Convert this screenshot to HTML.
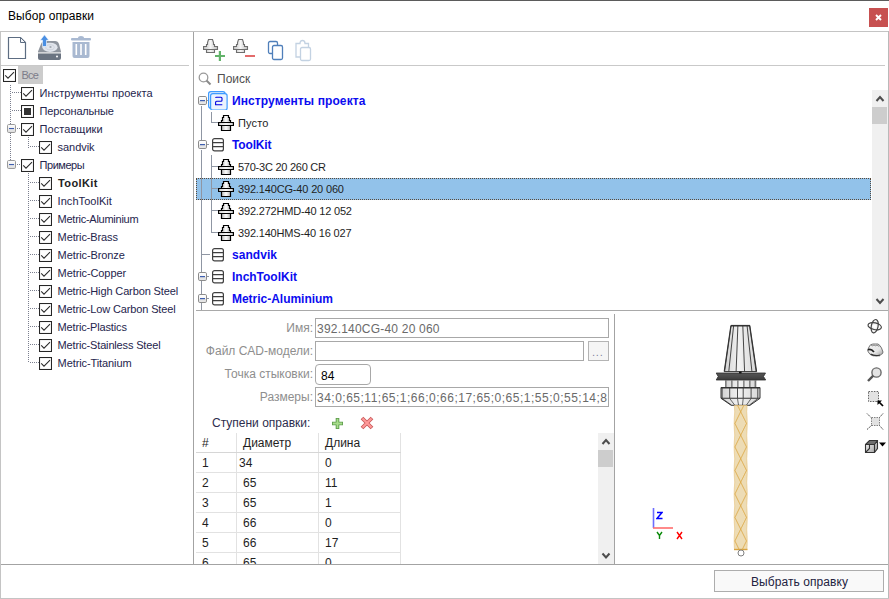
<!DOCTYPE html>
<html><head><meta charset="utf-8"><style>
html,body{margin:0;padding:0;}
body{width:889px;height:599px;position:relative;overflow:hidden;background:#fff;font-family:"Liberation Sans", sans-serif;}
</style></head><body>
<div style="position:absolute;left:0px;top:0px;width:889px;height:1px;background:#5b5b5b;"></div><div style="position:absolute;left:8px;top:10.04px;line-height:12px;font-size:12px;color:#000;font-weight:400;letter-spacing:0.081px;white-space:pre;">Выбор оправки</div><div style="position:absolute;left:869px;top:8px;width:19px;height:19px;background:#c75050;"></div><svg style="position:absolute;left:869px;top:8px" width="19" height="19" viewBox="0 0 19 19"><path d="M7,7 L12,12 M12,7 L7,12" stroke="#fff" stroke-width="1.9"/></svg><div style="position:absolute;left:0px;top:31px;width:889px;height:1px;background:#c4c4c4;"></div><div style="position:absolute;left:0px;top:31px;width:1px;height:568px;background:#c4c4c4;"></div><div style="position:absolute;left:888px;top:31px;width:1px;height:568px;background:#b9b9b9;"></div><div style="position:absolute;left:0px;top:598px;width:889px;height:1px;background:#c4c4c4;"></div><div style="position:absolute;left:193px;top:32px;width:1px;height:532px;background:#a3a3a3;"></div><div style="position:absolute;left:1px;top:564px;width:887px;height:1px;background:#a3a3a3;"></div><svg style="position:absolute;left:7px;top:36px" width="21" height="24" viewBox="0 0 21 24"><path d="M1.5,1.5 H13.5 L18.5,6.5 V22.5 H1.5 Z" fill="#fff" stroke="#5d6d82" stroke-width="1.2"/><path d="M13.5,1.5 V6.5 H18.5 Z" fill="#f2f4f7" stroke="#5d6d82" stroke-width="1"/></svg><svg style="position:absolute;left:37px;top:34px" width="25" height="27" viewBox="0 0 25 27"><path d="M4,10 Q5,7 8,7 H18 Q21,7 22,10 L24,17.5 V19 H1 V17.5 Z" fill="#8f959e"/><ellipse cx="13" cy="13.3" rx="7.6" ry="4.6" fill="#e1e5ec"/><ellipse cx="13" cy="13.3" rx="4.2" ry="2.5" fill="none" stroke="#c9ced8" stroke-width="0.8"/><ellipse cx="13.5" cy="13" rx="1.2" ry="0.8" fill="#8f959e"/><path d="M1,19.2 H24 V24 Q24,26 22,26 H3 Q1,26 1,24 Z" fill="#6b7481"/><rect x="1" y="18.3" width="23" height="1" fill="#f0f0f0"/><circle cx="20" cy="22.6" r="1" fill="#fff"/><path d="M7.5,0.8 L11.8,6.3 H9.5 V12.5 H5.5 V6.3 H3.2 Z" fill="#4a8fe3" stroke="#fff" stroke-width="0.6"/></svg><svg style="position:absolute;left:70px;top:35px" width="22" height="24" viewBox="0 0 22 24"><path d="M8,3 Q8,1 11,1 Q14,1 14,3 Z" fill="#a9b9d1"/><rect x="1" y="3" width="20" height="2.5" rx="1" fill="#a9b9d1"/><path d="M2.5,7 H19.5 V21 Q19.5,23 17.5,23 H4.5 Q2.5,23 2.5,21 Z" fill="#a9b9d1"/><rect x="5.5" y="9" width="1.6" height="11" fill="#fff"/><rect x="10.2" y="9" width="1.6" height="11" fill="#fff"/><rect x="14.9" y="9" width="1.6" height="11" fill="#fff"/></svg><div style="position:absolute;left:1px;top:65px;width:188px;height:1px;background:#c9c9c9;"></div><svg style="position:absolute;left:3px;top:69px" width="13" height="13" viewBox="0 0 13 13"><rect x="0.5" y="0.5" width="12" height="12" fill="#fff" stroke="#262626" stroke-width="1.1"/><path d="M2.2,6.3 L5,9.2 L11,3.2" fill="none" stroke="#2a2a2a" stroke-width="1.05"/></svg><div style="position:absolute;left:18px;top:66px;width:25px;height:18px;background:#cccccc;"></div><div style="position:absolute;left:21.5px;top:70.19px;line-height:11px;font-size:11px;color:#7c7c8a;font-weight:400;letter-spacing:-0.734px;white-space:pre;">Все</div><div style="position:absolute;left:10px;top:85px;width:1px;height:1px;background:#7b7f8f;"></div><div style="position:absolute;left:10px;top:87px;width:1px;height:1px;background:#7b7f8f;"></div><div style="position:absolute;left:10px;top:89px;width:1px;height:1px;background:#7b7f8f;"></div><div style="position:absolute;left:10px;top:91px;width:1px;height:1px;background:#7b7f8f;"></div><div style="position:absolute;left:10px;top:93px;width:1px;height:1px;background:#7b7f8f;"></div><div style="position:absolute;left:10px;top:95px;width:1px;height:1px;background:#7b7f8f;"></div><div style="position:absolute;left:10px;top:97px;width:1px;height:1px;background:#7b7f8f;"></div><div style="position:absolute;left:10px;top:99px;width:1px;height:1px;background:#7b7f8f;"></div><div style="position:absolute;left:10px;top:101px;width:1px;height:1px;background:#7b7f8f;"></div><div style="position:absolute;left:10px;top:103px;width:1px;height:1px;background:#7b7f8f;"></div><div style="position:absolute;left:10px;top:105px;width:1px;height:1px;background:#7b7f8f;"></div><div style="position:absolute;left:10px;top:107px;width:1px;height:1px;background:#7b7f8f;"></div><div style="position:absolute;left:10px;top:109px;width:1px;height:1px;background:#7b7f8f;"></div><div style="position:absolute;left:10px;top:111px;width:1px;height:1px;background:#7b7f8f;"></div><div style="position:absolute;left:10px;top:113px;width:1px;height:1px;background:#7b7f8f;"></div><div style="position:absolute;left:10px;top:115px;width:1px;height:1px;background:#7b7f8f;"></div><div style="position:absolute;left:10px;top:117px;width:1px;height:1px;background:#7b7f8f;"></div><div style="position:absolute;left:10px;top:119px;width:1px;height:1px;background:#7b7f8f;"></div><div style="position:absolute;left:10px;top:121px;width:1px;height:1px;background:#7b7f8f;"></div><div style="position:absolute;left:10px;top:123px;width:1px;height:1px;background:#7b7f8f;"></div><div style="position:absolute;left:10px;top:125px;width:1px;height:1px;background:#7b7f8f;"></div><div style="position:absolute;left:10px;top:127px;width:1px;height:1px;background:#7b7f8f;"></div><div style="position:absolute;left:10px;top:129px;width:1px;height:1px;background:#7b7f8f;"></div><div style="position:absolute;left:10px;top:131px;width:1px;height:1px;background:#7b7f8f;"></div><div style="position:absolute;left:10px;top:133px;width:1px;height:1px;background:#7b7f8f;"></div><div style="position:absolute;left:10px;top:135px;width:1px;height:1px;background:#7b7f8f;"></div><div style="position:absolute;left:10px;top:137px;width:1px;height:1px;background:#7b7f8f;"></div><div style="position:absolute;left:10px;top:139px;width:1px;height:1px;background:#7b7f8f;"></div><div style="position:absolute;left:10px;top:141px;width:1px;height:1px;background:#7b7f8f;"></div><div style="position:absolute;left:10px;top:143px;width:1px;height:1px;background:#7b7f8f;"></div><div style="position:absolute;left:10px;top:145px;width:1px;height:1px;background:#7b7f8f;"></div><div style="position:absolute;left:10px;top:147px;width:1px;height:1px;background:#7b7f8f;"></div><div style="position:absolute;left:10px;top:149px;width:1px;height:1px;background:#7b7f8f;"></div><div style="position:absolute;left:10px;top:151px;width:1px;height:1px;background:#7b7f8f;"></div><div style="position:absolute;left:10px;top:153px;width:1px;height:1px;background:#7b7f8f;"></div><div style="position:absolute;left:10px;top:155px;width:1px;height:1px;background:#7b7f8f;"></div><div style="position:absolute;left:10px;top:157px;width:1px;height:1px;background:#7b7f8f;"></div><div style="position:absolute;left:10px;top:159px;width:1px;height:1px;background:#7b7f8f;"></div><div style="position:absolute;left:10px;top:161px;width:1px;height:1px;background:#7b7f8f;"></div><div style="position:absolute;left:10px;top:163px;width:1px;height:1px;background:#7b7f8f;"></div><div style="position:absolute;left:10px;top:165px;width:1px;height:1px;background:#7b7f8f;"></div><div style="position:absolute;left:28px;top:137px;width:1px;height:1px;background:#7b7f8f;"></div><div style="position:absolute;left:28px;top:139px;width:1px;height:1px;background:#7b7f8f;"></div><div style="position:absolute;left:28px;top:141px;width:1px;height:1px;background:#7b7f8f;"></div><div style="position:absolute;left:28px;top:143px;width:1px;height:1px;background:#7b7f8f;"></div><div style="position:absolute;left:28px;top:145px;width:1px;height:1px;background:#7b7f8f;"></div><div style="position:absolute;left:28px;top:147px;width:1px;height:1px;background:#7b7f8f;"></div><div style="position:absolute;left:28px;top:173px;width:1px;height:1px;background:#7b7f8f;"></div><div style="position:absolute;left:28px;top:175px;width:1px;height:1px;background:#7b7f8f;"></div><div style="position:absolute;left:28px;top:177px;width:1px;height:1px;background:#7b7f8f;"></div><div style="position:absolute;left:28px;top:179px;width:1px;height:1px;background:#7b7f8f;"></div><div style="position:absolute;left:28px;top:181px;width:1px;height:1px;background:#7b7f8f;"></div><div style="position:absolute;left:28px;top:183px;width:1px;height:1px;background:#7b7f8f;"></div><div style="position:absolute;left:28px;top:185px;width:1px;height:1px;background:#7b7f8f;"></div><div style="position:absolute;left:28px;top:187px;width:1px;height:1px;background:#7b7f8f;"></div><div style="position:absolute;left:28px;top:189px;width:1px;height:1px;background:#7b7f8f;"></div><div style="position:absolute;left:28px;top:191px;width:1px;height:1px;background:#7b7f8f;"></div><div style="position:absolute;left:28px;top:193px;width:1px;height:1px;background:#7b7f8f;"></div><div style="position:absolute;left:28px;top:195px;width:1px;height:1px;background:#7b7f8f;"></div><div style="position:absolute;left:28px;top:197px;width:1px;height:1px;background:#7b7f8f;"></div><div style="position:absolute;left:28px;top:199px;width:1px;height:1px;background:#7b7f8f;"></div><div style="position:absolute;left:28px;top:201px;width:1px;height:1px;background:#7b7f8f;"></div><div style="position:absolute;left:28px;top:203px;width:1px;height:1px;background:#7b7f8f;"></div><div style="position:absolute;left:28px;top:205px;width:1px;height:1px;background:#7b7f8f;"></div><div style="position:absolute;left:28px;top:207px;width:1px;height:1px;background:#7b7f8f;"></div><div style="position:absolute;left:28px;top:209px;width:1px;height:1px;background:#7b7f8f;"></div><div style="position:absolute;left:28px;top:211px;width:1px;height:1px;background:#7b7f8f;"></div><div style="position:absolute;left:28px;top:213px;width:1px;height:1px;background:#7b7f8f;"></div><div style="position:absolute;left:28px;top:215px;width:1px;height:1px;background:#7b7f8f;"></div><div style="position:absolute;left:28px;top:217px;width:1px;height:1px;background:#7b7f8f;"></div><div style="position:absolute;left:28px;top:219px;width:1px;height:1px;background:#7b7f8f;"></div><div style="position:absolute;left:28px;top:221px;width:1px;height:1px;background:#7b7f8f;"></div><div style="position:absolute;left:28px;top:223px;width:1px;height:1px;background:#7b7f8f;"></div><div style="position:absolute;left:28px;top:225px;width:1px;height:1px;background:#7b7f8f;"></div><div style="position:absolute;left:28px;top:227px;width:1px;height:1px;background:#7b7f8f;"></div><div style="position:absolute;left:28px;top:229px;width:1px;height:1px;background:#7b7f8f;"></div><div style="position:absolute;left:28px;top:231px;width:1px;height:1px;background:#7b7f8f;"></div><div style="position:absolute;left:28px;top:233px;width:1px;height:1px;background:#7b7f8f;"></div><div style="position:absolute;left:28px;top:235px;width:1px;height:1px;background:#7b7f8f;"></div><div style="position:absolute;left:28px;top:237px;width:1px;height:1px;background:#7b7f8f;"></div><div style="position:absolute;left:28px;top:239px;width:1px;height:1px;background:#7b7f8f;"></div><div style="position:absolute;left:28px;top:241px;width:1px;height:1px;background:#7b7f8f;"></div><div style="position:absolute;left:28px;top:243px;width:1px;height:1px;background:#7b7f8f;"></div><div style="position:absolute;left:28px;top:245px;width:1px;height:1px;background:#7b7f8f;"></div><div style="position:absolute;left:28px;top:247px;width:1px;height:1px;background:#7b7f8f;"></div><div style="position:absolute;left:28px;top:249px;width:1px;height:1px;background:#7b7f8f;"></div><div style="position:absolute;left:28px;top:251px;width:1px;height:1px;background:#7b7f8f;"></div><div style="position:absolute;left:28px;top:253px;width:1px;height:1px;background:#7b7f8f;"></div><div style="position:absolute;left:28px;top:255px;width:1px;height:1px;background:#7b7f8f;"></div><div style="position:absolute;left:28px;top:257px;width:1px;height:1px;background:#7b7f8f;"></div><div style="position:absolute;left:28px;top:259px;width:1px;height:1px;background:#7b7f8f;"></div><div style="position:absolute;left:28px;top:261px;width:1px;height:1px;background:#7b7f8f;"></div><div style="position:absolute;left:28px;top:263px;width:1px;height:1px;background:#7b7f8f;"></div><div style="position:absolute;left:28px;top:265px;width:1px;height:1px;background:#7b7f8f;"></div><div style="position:absolute;left:28px;top:267px;width:1px;height:1px;background:#7b7f8f;"></div><div style="position:absolute;left:28px;top:269px;width:1px;height:1px;background:#7b7f8f;"></div><div style="position:absolute;left:28px;top:271px;width:1px;height:1px;background:#7b7f8f;"></div><div style="position:absolute;left:28px;top:273px;width:1px;height:1px;background:#7b7f8f;"></div><div style="position:absolute;left:28px;top:275px;width:1px;height:1px;background:#7b7f8f;"></div><div style="position:absolute;left:28px;top:277px;width:1px;height:1px;background:#7b7f8f;"></div><div style="position:absolute;left:28px;top:279px;width:1px;height:1px;background:#7b7f8f;"></div><div style="position:absolute;left:28px;top:281px;width:1px;height:1px;background:#7b7f8f;"></div><div style="position:absolute;left:28px;top:283px;width:1px;height:1px;background:#7b7f8f;"></div><div style="position:absolute;left:28px;top:285px;width:1px;height:1px;background:#7b7f8f;"></div><div style="position:absolute;left:28px;top:287px;width:1px;height:1px;background:#7b7f8f;"></div><div style="position:absolute;left:28px;top:289px;width:1px;height:1px;background:#7b7f8f;"></div><div style="position:absolute;left:28px;top:291px;width:1px;height:1px;background:#7b7f8f;"></div><div style="position:absolute;left:28px;top:293px;width:1px;height:1px;background:#7b7f8f;"></div><div style="position:absolute;left:28px;top:295px;width:1px;height:1px;background:#7b7f8f;"></div><div style="position:absolute;left:28px;top:297px;width:1px;height:1px;background:#7b7f8f;"></div><div style="position:absolute;left:28px;top:299px;width:1px;height:1px;background:#7b7f8f;"></div><div style="position:absolute;left:28px;top:301px;width:1px;height:1px;background:#7b7f8f;"></div><div style="position:absolute;left:28px;top:303px;width:1px;height:1px;background:#7b7f8f;"></div><div style="position:absolute;left:28px;top:305px;width:1px;height:1px;background:#7b7f8f;"></div><div style="position:absolute;left:28px;top:307px;width:1px;height:1px;background:#7b7f8f;"></div><div style="position:absolute;left:28px;top:309px;width:1px;height:1px;background:#7b7f8f;"></div><div style="position:absolute;left:28px;top:311px;width:1px;height:1px;background:#7b7f8f;"></div><div style="position:absolute;left:28px;top:313px;width:1px;height:1px;background:#7b7f8f;"></div><div style="position:absolute;left:28px;top:315px;width:1px;height:1px;background:#7b7f8f;"></div><div style="position:absolute;left:28px;top:317px;width:1px;height:1px;background:#7b7f8f;"></div><div style="position:absolute;left:28px;top:319px;width:1px;height:1px;background:#7b7f8f;"></div><div style="position:absolute;left:28px;top:321px;width:1px;height:1px;background:#7b7f8f;"></div><div style="position:absolute;left:28px;top:323px;width:1px;height:1px;background:#7b7f8f;"></div><div style="position:absolute;left:28px;top:325px;width:1px;height:1px;background:#7b7f8f;"></div><div style="position:absolute;left:28px;top:327px;width:1px;height:1px;background:#7b7f8f;"></div><div style="position:absolute;left:28px;top:329px;width:1px;height:1px;background:#7b7f8f;"></div><div style="position:absolute;left:28px;top:331px;width:1px;height:1px;background:#7b7f8f;"></div><div style="position:absolute;left:28px;top:333px;width:1px;height:1px;background:#7b7f8f;"></div><div style="position:absolute;left:28px;top:335px;width:1px;height:1px;background:#7b7f8f;"></div><div style="position:absolute;left:28px;top:337px;width:1px;height:1px;background:#7b7f8f;"></div><div style="position:absolute;left:28px;top:339px;width:1px;height:1px;background:#7b7f8f;"></div><div style="position:absolute;left:28px;top:341px;width:1px;height:1px;background:#7b7f8f;"></div><div style="position:absolute;left:28px;top:343px;width:1px;height:1px;background:#7b7f8f;"></div><div style="position:absolute;left:28px;top:345px;width:1px;height:1px;background:#7b7f8f;"></div><div style="position:absolute;left:28px;top:347px;width:1px;height:1px;background:#7b7f8f;"></div><div style="position:absolute;left:28px;top:349px;width:1px;height:1px;background:#7b7f8f;"></div><div style="position:absolute;left:28px;top:351px;width:1px;height:1px;background:#7b7f8f;"></div><div style="position:absolute;left:28px;top:353px;width:1px;height:1px;background:#7b7f8f;"></div><div style="position:absolute;left:28px;top:355px;width:1px;height:1px;background:#7b7f8f;"></div><div style="position:absolute;left:28px;top:357px;width:1px;height:1px;background:#7b7f8f;"></div><div style="position:absolute;left:28px;top:359px;width:1px;height:1px;background:#7b7f8f;"></div><div style="position:absolute;left:28px;top:361px;width:1px;height:1px;background:#7b7f8f;"></div><div style="position:absolute;left:12px;top:92px;width:1px;height:1px;background:#7b7f8f;"></div><div style="position:absolute;left:14px;top:92px;width:1px;height:1px;background:#7b7f8f;"></div><div style="position:absolute;left:16px;top:92px;width:1px;height:1px;background:#7b7f8f;"></div><div style="position:absolute;left:18px;top:92px;width:1px;height:1px;background:#7b7f8f;"></div><div style="position:absolute;left:20px;top:92px;width:1px;height:1px;background:#7b7f8f;"></div><svg style="position:absolute;left:21px;top:87px" width="13" height="13" viewBox="0 0 13 13"><rect x="0.5" y="0.5" width="12" height="12" fill="#fff" stroke="#262626" stroke-width="1.1"/><path d="M2.2,6.3 L5,9.2 L11,3.2" fill="none" stroke="#2a2a2a" stroke-width="1.05"/></svg><div style="position:absolute;left:39.6px;top:88.19px;line-height:11px;font-size:11px;color:#25254d;font-weight:400;letter-spacing:0.059px;white-space:pre;">Инструменты проекта</div><div style="position:absolute;left:12px;top:110px;width:1px;height:1px;background:#7b7f8f;"></div><div style="position:absolute;left:14px;top:110px;width:1px;height:1px;background:#7b7f8f;"></div><div style="position:absolute;left:16px;top:110px;width:1px;height:1px;background:#7b7f8f;"></div><div style="position:absolute;left:18px;top:110px;width:1px;height:1px;background:#7b7f8f;"></div><div style="position:absolute;left:20px;top:110px;width:1px;height:1px;background:#7b7f8f;"></div><svg style="position:absolute;left:21px;top:105px" width="13" height="13" viewBox="0 0 13 13"><rect x="0.5" y="0.5" width="12" height="12" fill="#fff" stroke="#262626" stroke-width="1.1"/><rect x="3" y="3" width="7" height="7" fill="#333"/></svg><div style="position:absolute;left:39.6px;top:106.19px;line-height:11px;font-size:11px;color:#25254d;font-weight:400;letter-spacing:-0.193px;white-space:pre;">Персональные</div><svg style="position:absolute;left:7px;top:124px" width="9" height="9" viewBox="0 0 9 9"><defs><linearGradient id="ge" x1="0" y1="0" x2="0" y2="1"><stop offset="0" stop-color="#fff"/><stop offset="1" stop-color="#dcdcdc"/></linearGradient></defs><rect x="0.5" y="0.5" width="8" height="8" rx="1.2" fill="url(#ge)" stroke="#9a9a9a"/><rect x="2" y="4" width="5" height="1.1" fill="#3f5fb0"/></svg><div style="position:absolute;left:17px;top:128px;width:1px;height:1px;background:#7b7f8f;"></div><div style="position:absolute;left:19px;top:128px;width:1px;height:1px;background:#7b7f8f;"></div><svg style="position:absolute;left:21px;top:123px" width="13" height="13" viewBox="0 0 13 13"><rect x="0.5" y="0.5" width="12" height="12" fill="#fff" stroke="#262626" stroke-width="1.1"/><path d="M2.2,6.3 L5,9.2 L11,3.2" fill="none" stroke="#2a2a2a" stroke-width="1.05"/></svg><div style="position:absolute;left:39.6px;top:124.19px;line-height:11px;font-size:11px;color:#25254d;font-weight:400;letter-spacing:0.049px;white-space:pre;">Поставщики</div><div style="position:absolute;left:30px;top:146px;width:1px;height:1px;background:#7b7f8f;"></div><div style="position:absolute;left:32px;top:146px;width:1px;height:1px;background:#7b7f8f;"></div><div style="position:absolute;left:34px;top:146px;width:1px;height:1px;background:#7b7f8f;"></div><div style="position:absolute;left:36px;top:146px;width:1px;height:1px;background:#7b7f8f;"></div><div style="position:absolute;left:38px;top:146px;width:1px;height:1px;background:#7b7f8f;"></div><svg style="position:absolute;left:39px;top:141px" width="13" height="13" viewBox="0 0 13 13"><rect x="0.5" y="0.5" width="12" height="12" fill="#fff" stroke="#262626" stroke-width="1.1"/><path d="M2.2,6.3 L5,9.2 L11,3.2" fill="none" stroke="#2a2a2a" stroke-width="1.05"/></svg><div style="position:absolute;left:57.6px;top:142.19px;line-height:11px;font-size:11px;color:#25254d;font-weight:400;letter-spacing:-0.049px;white-space:pre;">sandvik</div><svg style="position:absolute;left:7px;top:160px" width="9" height="9" viewBox="0 0 9 9"><defs><linearGradient id="ge" x1="0" y1="0" x2="0" y2="1"><stop offset="0" stop-color="#fff"/><stop offset="1" stop-color="#dcdcdc"/></linearGradient></defs><rect x="0.5" y="0.5" width="8" height="8" rx="1.2" fill="url(#ge)" stroke="#9a9a9a"/><rect x="2" y="4" width="5" height="1.1" fill="#3f5fb0"/></svg><div style="position:absolute;left:17px;top:164px;width:1px;height:1px;background:#7b7f8f;"></div><div style="position:absolute;left:19px;top:164px;width:1px;height:1px;background:#7b7f8f;"></div><svg style="position:absolute;left:21px;top:159px" width="13" height="13" viewBox="0 0 13 13"><rect x="0.5" y="0.5" width="12" height="12" fill="#fff" stroke="#262626" stroke-width="1.1"/><path d="M2.2,6.3 L5,9.2 L11,3.2" fill="none" stroke="#2a2a2a" stroke-width="1.05"/></svg><div style="position:absolute;left:39.6px;top:160.19px;line-height:11px;font-size:11px;color:#25254d;font-weight:400;letter-spacing:-0.479px;white-space:pre;">Примеры</div><div style="position:absolute;left:30px;top:182px;width:1px;height:1px;background:#7b7f8f;"></div><div style="position:absolute;left:32px;top:182px;width:1px;height:1px;background:#7b7f8f;"></div><div style="position:absolute;left:34px;top:182px;width:1px;height:1px;background:#7b7f8f;"></div><div style="position:absolute;left:36px;top:182px;width:1px;height:1px;background:#7b7f8f;"></div><div style="position:absolute;left:38px;top:182px;width:1px;height:1px;background:#7b7f8f;"></div><svg style="position:absolute;left:39px;top:177px" width="13" height="13" viewBox="0 0 13 13"><rect x="0.5" y="0.5" width="12" height="12" fill="#fff" stroke="#262626" stroke-width="1.1"/><path d="M2.2,6.3 L5,9.2 L11,3.2" fill="none" stroke="#2a2a2a" stroke-width="1.05"/></svg><div style="position:absolute;left:58px;top:178.19px;line-height:11px;font-size:11px;color:#222;font-weight:700;letter-spacing:0.406px;white-space:pre;">ToolKit</div><div style="position:absolute;left:30px;top:200px;width:1px;height:1px;background:#7b7f8f;"></div><div style="position:absolute;left:32px;top:200px;width:1px;height:1px;background:#7b7f8f;"></div><div style="position:absolute;left:34px;top:200px;width:1px;height:1px;background:#7b7f8f;"></div><div style="position:absolute;left:36px;top:200px;width:1px;height:1px;background:#7b7f8f;"></div><div style="position:absolute;left:38px;top:200px;width:1px;height:1px;background:#7b7f8f;"></div><svg style="position:absolute;left:39px;top:195px" width="13" height="13" viewBox="0 0 13 13"><rect x="0.5" y="0.5" width="12" height="12" fill="#fff" stroke="#262626" stroke-width="1.1"/><path d="M2.2,6.3 L5,9.2 L11,3.2" fill="none" stroke="#2a2a2a" stroke-width="1.05"/></svg><div style="position:absolute;left:57.6px;top:196.19px;line-height:11px;font-size:11px;color:#25254d;font-weight:400;letter-spacing:0.049px;white-space:pre;">InchToolKit</div><div style="position:absolute;left:30px;top:218px;width:1px;height:1px;background:#7b7f8f;"></div><div style="position:absolute;left:32px;top:218px;width:1px;height:1px;background:#7b7f8f;"></div><div style="position:absolute;left:34px;top:218px;width:1px;height:1px;background:#7b7f8f;"></div><div style="position:absolute;left:36px;top:218px;width:1px;height:1px;background:#7b7f8f;"></div><div style="position:absolute;left:38px;top:218px;width:1px;height:1px;background:#7b7f8f;"></div><svg style="position:absolute;left:39px;top:213px" width="13" height="13" viewBox="0 0 13 13"><rect x="0.5" y="0.5" width="12" height="12" fill="#fff" stroke="#262626" stroke-width="1.1"/><path d="M2.2,6.3 L5,9.2 L11,3.2" fill="none" stroke="#2a2a2a" stroke-width="1.05"/></svg><div style="position:absolute;left:57.6px;top:214.19px;line-height:11px;font-size:11px;color:#25254d;font-weight:400;letter-spacing:-0.265px;white-space:pre;">Metric-Aluminium</div><div style="position:absolute;left:30px;top:236px;width:1px;height:1px;background:#7b7f8f;"></div><div style="position:absolute;left:32px;top:236px;width:1px;height:1px;background:#7b7f8f;"></div><div style="position:absolute;left:34px;top:236px;width:1px;height:1px;background:#7b7f8f;"></div><div style="position:absolute;left:36px;top:236px;width:1px;height:1px;background:#7b7f8f;"></div><div style="position:absolute;left:38px;top:236px;width:1px;height:1px;background:#7b7f8f;"></div><svg style="position:absolute;left:39px;top:231px" width="13" height="13" viewBox="0 0 13 13"><rect x="0.5" y="0.5" width="12" height="12" fill="#fff" stroke="#262626" stroke-width="1.1"/><path d="M2.2,6.3 L5,9.2 L11,3.2" fill="none" stroke="#2a2a2a" stroke-width="1.05"/></svg><div style="position:absolute;left:57.6px;top:232.19px;line-height:11px;font-size:11px;color:#25254d;font-weight:400;letter-spacing:-0.121px;white-space:pre;">Metric-Brass</div><div style="position:absolute;left:30px;top:254px;width:1px;height:1px;background:#7b7f8f;"></div><div style="position:absolute;left:32px;top:254px;width:1px;height:1px;background:#7b7f8f;"></div><div style="position:absolute;left:34px;top:254px;width:1px;height:1px;background:#7b7f8f;"></div><div style="position:absolute;left:36px;top:254px;width:1px;height:1px;background:#7b7f8f;"></div><div style="position:absolute;left:38px;top:254px;width:1px;height:1px;background:#7b7f8f;"></div><svg style="position:absolute;left:39px;top:249px" width="13" height="13" viewBox="0 0 13 13"><rect x="0.5" y="0.5" width="12" height="12" fill="#fff" stroke="#262626" stroke-width="1.1"/><path d="M2.2,6.3 L5,9.2 L11,3.2" fill="none" stroke="#2a2a2a" stroke-width="1.05"/></svg><div style="position:absolute;left:57.6px;top:250.19px;line-height:11px;font-size:11px;color:#25254d;font-weight:400;letter-spacing:-0.097px;white-space:pre;">Metric-Bronze</div><div style="position:absolute;left:30px;top:272px;width:1px;height:1px;background:#7b7f8f;"></div><div style="position:absolute;left:32px;top:272px;width:1px;height:1px;background:#7b7f8f;"></div><div style="position:absolute;left:34px;top:272px;width:1px;height:1px;background:#7b7f8f;"></div><div style="position:absolute;left:36px;top:272px;width:1px;height:1px;background:#7b7f8f;"></div><div style="position:absolute;left:38px;top:272px;width:1px;height:1px;background:#7b7f8f;"></div><svg style="position:absolute;left:39px;top:267px" width="13" height="13" viewBox="0 0 13 13"><rect x="0.5" y="0.5" width="12" height="12" fill="#fff" stroke="#262626" stroke-width="1.1"/><path d="M2.2,6.3 L5,9.2 L11,3.2" fill="none" stroke="#2a2a2a" stroke-width="1.05"/></svg><div style="position:absolute;left:57.6px;top:268.19px;line-height:11px;font-size:11px;color:#25254d;font-weight:400;letter-spacing:-0.099px;white-space:pre;">Metric-Copper</div><div style="position:absolute;left:30px;top:290px;width:1px;height:1px;background:#7b7f8f;"></div><div style="position:absolute;left:32px;top:290px;width:1px;height:1px;background:#7b7f8f;"></div><div style="position:absolute;left:34px;top:290px;width:1px;height:1px;background:#7b7f8f;"></div><div style="position:absolute;left:36px;top:290px;width:1px;height:1px;background:#7b7f8f;"></div><div style="position:absolute;left:38px;top:290px;width:1px;height:1px;background:#7b7f8f;"></div><svg style="position:absolute;left:39px;top:285px" width="13" height="13" viewBox="0 0 13 13"><rect x="0.5" y="0.5" width="12" height="12" fill="#fff" stroke="#262626" stroke-width="1.1"/><path d="M2.2,6.3 L5,9.2 L11,3.2" fill="none" stroke="#2a2a2a" stroke-width="1.05"/></svg><div style="position:absolute;left:57.6px;top:286.19px;line-height:11px;font-size:11px;color:#25254d;font-weight:400;letter-spacing:-0.130px;white-space:pre;">Metric-High Carbon Steel</div><div style="position:absolute;left:30px;top:308px;width:1px;height:1px;background:#7b7f8f;"></div><div style="position:absolute;left:32px;top:308px;width:1px;height:1px;background:#7b7f8f;"></div><div style="position:absolute;left:34px;top:308px;width:1px;height:1px;background:#7b7f8f;"></div><div style="position:absolute;left:36px;top:308px;width:1px;height:1px;background:#7b7f8f;"></div><div style="position:absolute;left:38px;top:308px;width:1px;height:1px;background:#7b7f8f;"></div><svg style="position:absolute;left:39px;top:303px" width="13" height="13" viewBox="0 0 13 13"><rect x="0.5" y="0.5" width="12" height="12" fill="#fff" stroke="#262626" stroke-width="1.1"/><path d="M2.2,6.3 L5,9.2 L11,3.2" fill="none" stroke="#2a2a2a" stroke-width="1.05"/></svg><div style="position:absolute;left:57.6px;top:304.19px;line-height:11px;font-size:11px;color:#25254d;font-weight:400;letter-spacing:-0.135px;white-space:pre;">Metric-Low Carbon Steel</div><div style="position:absolute;left:30px;top:326px;width:1px;height:1px;background:#7b7f8f;"></div><div style="position:absolute;left:32px;top:326px;width:1px;height:1px;background:#7b7f8f;"></div><div style="position:absolute;left:34px;top:326px;width:1px;height:1px;background:#7b7f8f;"></div><div style="position:absolute;left:36px;top:326px;width:1px;height:1px;background:#7b7f8f;"></div><div style="position:absolute;left:38px;top:326px;width:1px;height:1px;background:#7b7f8f;"></div><svg style="position:absolute;left:39px;top:321px" width="13" height="13" viewBox="0 0 13 13"><rect x="0.5" y="0.5" width="12" height="12" fill="#fff" stroke="#262626" stroke-width="1.1"/><path d="M2.2,6.3 L5,9.2 L11,3.2" fill="none" stroke="#2a2a2a" stroke-width="1.05"/></svg><div style="position:absolute;left:57.6px;top:322.19px;line-height:11px;font-size:11px;color:#25254d;font-weight:400;letter-spacing:-0.158px;white-space:pre;">Metric-Plastics</div><div style="position:absolute;left:30px;top:344px;width:1px;height:1px;background:#7b7f8f;"></div><div style="position:absolute;left:32px;top:344px;width:1px;height:1px;background:#7b7f8f;"></div><div style="position:absolute;left:34px;top:344px;width:1px;height:1px;background:#7b7f8f;"></div><div style="position:absolute;left:36px;top:344px;width:1px;height:1px;background:#7b7f8f;"></div><div style="position:absolute;left:38px;top:344px;width:1px;height:1px;background:#7b7f8f;"></div><svg style="position:absolute;left:39px;top:339px" width="13" height="13" viewBox="0 0 13 13"><rect x="0.5" y="0.5" width="12" height="12" fill="#fff" stroke="#262626" stroke-width="1.1"/><path d="M2.2,6.3 L5,9.2 L11,3.2" fill="none" stroke="#2a2a2a" stroke-width="1.05"/></svg><div style="position:absolute;left:57.6px;top:340.19px;line-height:11px;font-size:11px;color:#25254d;font-weight:400;letter-spacing:-0.161px;white-space:pre;">Metric-Stainless Steel</div><div style="position:absolute;left:30px;top:362px;width:1px;height:1px;background:#7b7f8f;"></div><div style="position:absolute;left:32px;top:362px;width:1px;height:1px;background:#7b7f8f;"></div><div style="position:absolute;left:34px;top:362px;width:1px;height:1px;background:#7b7f8f;"></div><div style="position:absolute;left:36px;top:362px;width:1px;height:1px;background:#7b7f8f;"></div><div style="position:absolute;left:38px;top:362px;width:1px;height:1px;background:#7b7f8f;"></div><svg style="position:absolute;left:39px;top:357px" width="13" height="13" viewBox="0 0 13 13"><rect x="0.5" y="0.5" width="12" height="12" fill="#fff" stroke="#262626" stroke-width="1.1"/><path d="M2.2,6.3 L5,9.2 L11,3.2" fill="none" stroke="#2a2a2a" stroke-width="1.05"/></svg><div style="position:absolute;left:57.6px;top:358.19px;line-height:11px;font-size:11px;color:#25254d;font-weight:400;letter-spacing:-0.099px;white-space:pre;">Metric-Titanium</div><svg style="position:absolute;left:203px;top:39px" width="16" height="15" viewBox="0 0 16 15"><defs><linearGradient id="gh" x1="0" y1="0" x2="1" y2="0"><stop offset="0" stop-color="#bdbdbd"/><stop offset="0.5" stop-color="#f6f6f6"/><stop offset="1" stop-color="#bdbdbd"/></linearGradient></defs><path d="M5.5,0.5 H9.5 L10.5,3.5 V5.5 H11.5 V7.5 H14.5 V10.5 H11.5 V13.5 H3.5 V10.5 H0.5 V7.5 H3.5 V5.5 H4.5 V3.5 Z" fill="url(#gh)" stroke="#6e6e6e" stroke-width="1.1"/><path d="M0.5,10.5 H14.5" stroke="#6e6e6e"/></svg><svg style="position:absolute;left:214px;top:50px" width="12" height="12" viewBox="0 0 12 12"><path d="M5.9,1 V11 M1,6 H11" stroke="#62b36a" stroke-width="2.2"/></svg><svg style="position:absolute;left:233px;top:39px" width="16" height="15" viewBox="0 0 16 15"><defs><linearGradient id="gh" x1="0" y1="0" x2="1" y2="0"><stop offset="0" stop-color="#bdbdbd"/><stop offset="0.5" stop-color="#f6f6f6"/><stop offset="1" stop-color="#bdbdbd"/></linearGradient></defs><path d="M5.5,0.5 H9.5 L10.5,3.5 V5.5 H11.5 V7.5 H14.5 V10.5 H11.5 V13.5 H3.5 V10.5 H0.5 V7.5 H3.5 V5.5 H4.5 V3.5 Z" fill="url(#gh)" stroke="#6e6e6e" stroke-width="1.1"/><path d="M0.5,10.5 H14.5" stroke="#6e6e6e"/></svg><div style="position:absolute;left:245px;top:55px;width:10px;height:2px;background:#e36b6b;"></div><svg style="position:absolute;left:267px;top:40px" width="18" height="21" viewBox="0 0 18 21"><rect x="1.5" y="1.5" width="9" height="12" rx="1.5" fill="#fff" stroke="#4f7fba" stroke-width="1.3"/><rect x="5.5" y="5.5" width="10" height="14" rx="1.5" fill="#fff" stroke="#4f7fba" stroke-width="1.3"/></svg><svg style="position:absolute;left:294px;top:39px" width="19" height="23" viewBox="0 0 19 23"><path d="M2,4.5 H6 Q6,1.5 8.5,1.5 Q11,1.5 11,4.5 H14.5 V18 H2 Z" fill="#fff" stroke="#c3d2e2" stroke-width="1.3"/><rect x="6.5" y="8.5" width="10" height="13" rx="1.5" fill="#fff" stroke="#c3d2e2" stroke-width="1.3"/></svg><div style="position:absolute;left:199px;top:65px;width:686px;height:1px;background:#c9c9c9;"></div><svg style="position:absolute;left:198px;top:72px" width="14" height="14" viewBox="0 0 14 14"><circle cx="5.5" cy="5.5" r="4.3" fill="none" stroke="#9a9a9a" stroke-width="1.3"/><path d="M8.5,8.5 L12.5,12.5" stroke="#8a8a8a" stroke-width="2"/></svg><div style="position:absolute;left:217px;top:73.34px;line-height:12px;font-size:12px;color:#505050;font-weight:400;white-space:pre;">Поиск</div><div style="position:absolute;left:196px;top:178px;width:675px;height:22px;background:#92c2ea;"></div><div style="position:absolute;left:196px;top:178px;width:673px;height:20px;border:1px dotted #5a4a3a"></div><div style="position:absolute;left:201px;top:106px;width:1px;height:34px;background:#8f96a3;"></div><div style="position:absolute;left:201px;top:150px;width:1px;height:160px;background:#8f96a3;"></div><svg style="position:absolute;left:198px;top:96px" width="9" height="9" viewBox="0 0 9 9"><defs><linearGradient id="ge2" x1="0" y1="0" x2="0" y2="1"><stop offset="0" stop-color="#fff"/><stop offset="0.55" stop-color="#f4f4f4"/><stop offset="0.6" stop-color="#e2e2e2"/><stop offset="1" stop-color="#e8e8e8"/></linearGradient></defs><rect x="0.5" y="0.5" width="8" height="8" rx="1.3" fill="url(#ge2)" stroke="#8c8c8c"/><rect x="2" y="4" width="5" height="1.2" fill="#3f5fb0"/></svg><div style="position:absolute;left:207px;top:100px;width:2px;height:1px;background:#8f96a3;"></div><svg style="position:absolute;left:208px;top:91px" width="20" height="19" viewBox="0 0 20 19"><rect x="0.6" y="0.6" width="16.5" height="16.5" rx="2.2" fill="#eaf3fe" stroke="#3d9bff" stroke-width="1.2"/><rect x="2.6" y="2.6" width="16.5" height="16.5" rx="2.2" fill="#eaf3fe" stroke="#3d9bff" stroke-width="1.2"/><path d="M7.5,6.8 Q7.5,6.3 8.5,6.3 H13 Q14,6.3 14,7.3 V9.2 Q14,10.2 13,10.2 H8.6 Q7.6,10.2 7.6,11.2 V13.8 H14.3" fill="none" stroke="#0000e0" stroke-width="1.1"/></svg><div style="position:absolute;left:232px;top:95.14px;line-height:12px;font-size:12px;color:#0c0cf0;font-weight:700;letter-spacing:0.105px;white-space:pre;">Инструменты проекта</div><div style="position:absolute;left:211px;top:112px;width:1px;height:11px;background:#8f96a3;"></div><div style="position:absolute;left:211px;top:122px;width:7px;height:1px;background:#8f96a3;"></div><svg style="position:absolute;left:218px;top:114px" width="16" height="17" viewBox="0 0 16 17"><defs><linearGradient id="gt" x1="0" y1="0" x2="1" y2="0"><stop offset="0" stop-color="#8a8a8a"/><stop offset="0.5" stop-color="#fdfdfd"/><stop offset="1" stop-color="#8a8a8a"/></linearGradient></defs><path d="M5.5,1.5 H10.5 V3.5 H11.5 V6.5 H12.5 V8.5 H15.5 V11.5 H12.5 V16.5 H3.5 V11.5 H0.5 V8.5 H3.5 V6.5 H4.5 V3.5 H5.5 Z" fill="url(#gt)" stroke="#000" stroke-width="1.2"/><path d="M0.5,8.5 H15.5 M0.5,11.5 H15.5" stroke="#000" stroke-width="1.2"/><rect x="1.5" y="9.4" width="13" height="1.3" fill="#f4f4f4"/></svg><div style="position:absolute;left:238px;top:118.19px;line-height:11px;font-size:11px;color:#1e1e1e;font-weight:400;letter-spacing:0.118px;white-space:pre;">Пусто</div><svg style="position:absolute;left:198px;top:140px" width="9" height="9" viewBox="0 0 9 9"><defs><linearGradient id="ge2" x1="0" y1="0" x2="0" y2="1"><stop offset="0" stop-color="#fff"/><stop offset="0.55" stop-color="#f4f4f4"/><stop offset="0.6" stop-color="#e2e2e2"/><stop offset="1" stop-color="#e8e8e8"/></linearGradient></defs><rect x="0.5" y="0.5" width="8" height="8" rx="1.3" fill="url(#ge2)" stroke="#8c8c8c"/><rect x="2" y="4" width="5" height="1.2" fill="#3f5fb0"/></svg><div style="position:absolute;left:207px;top:144px;width:2px;height:1px;background:#8f96a3;"></div><svg style="position:absolute;left:212px;top:138px" width="12" height="14" viewBox="0 0 12 14"><rect x="0.6" y="0.6" width="10.8" height="12.3" rx="2" fill="#fff" stroke="#404040" stroke-width="1.2"/><path d="M0.6,4.6 H11.4 M0.6,8.6 H11.4" stroke="#404040" stroke-width="1.2"/></svg><div style="position:absolute;left:232px;top:139.34px;line-height:12px;font-size:12px;color:#0c0cf0;font-weight:700;letter-spacing:-0.156px;white-space:pre;">ToolKit</div><div style="position:absolute;left:211px;top:155px;width:1px;height:78px;background:#8f96a3;"></div><div style="position:absolute;left:211px;top:166px;width:7px;height:1px;background:#8f96a3;"></div><svg style="position:absolute;left:218px;top:158px" width="16" height="17" viewBox="0 0 16 17"><defs><linearGradient id="gt" x1="0" y1="0" x2="1" y2="0"><stop offset="0" stop-color="#8a8a8a"/><stop offset="0.5" stop-color="#fdfdfd"/><stop offset="1" stop-color="#8a8a8a"/></linearGradient></defs><path d="M5.5,1.5 H10.5 V3.5 H11.5 V6.5 H12.5 V8.5 H15.5 V11.5 H12.5 V16.5 H3.5 V11.5 H0.5 V8.5 H3.5 V6.5 H4.5 V3.5 H5.5 Z" fill="url(#gt)" stroke="#000" stroke-width="1.2"/><path d="M0.5,8.5 H15.5 M0.5,11.5 H15.5" stroke="#000" stroke-width="1.2"/><rect x="1.5" y="9.4" width="13" height="1.3" fill="#f4f4f4"/></svg><div style="position:absolute;left:238px;top:162.29px;line-height:11px;font-size:11px;color:#1e1e1e;font-weight:400;letter-spacing:-0.249px;white-space:pre;">570-3C 20 260 CR</div><div style="position:absolute;left:211px;top:188px;width:7px;height:1px;background:#8f96a3;"></div><svg style="position:absolute;left:218px;top:180px" width="16" height="17" viewBox="0 0 16 17"><defs><linearGradient id="gt" x1="0" y1="0" x2="1" y2="0"><stop offset="0" stop-color="#8a8a8a"/><stop offset="0.5" stop-color="#fdfdfd"/><stop offset="1" stop-color="#8a8a8a"/></linearGradient></defs><path d="M5.5,1.5 H10.5 V3.5 H11.5 V6.5 H12.5 V8.5 H15.5 V11.5 H12.5 V16.5 H3.5 V11.5 H0.5 V8.5 H3.5 V6.5 H4.5 V3.5 H5.5 Z" fill="url(#gt)" stroke="#000" stroke-width="1.2"/><path d="M0.5,8.5 H15.5 M0.5,11.5 H15.5" stroke="#000" stroke-width="1.2"/><rect x="1.5" y="9.4" width="13" height="1.3" fill="#f4f4f4"/></svg><div style="position:absolute;left:238px;top:184.29px;line-height:11px;font-size:11px;color:#1e1e1e;font-weight:400;letter-spacing:-0.160px;white-space:pre;">392.140CG-40 20 060</div><div style="position:absolute;left:211px;top:210px;width:7px;height:1px;background:#8f96a3;"></div><svg style="position:absolute;left:218px;top:202px" width="16" height="17" viewBox="0 0 16 17"><defs><linearGradient id="gt" x1="0" y1="0" x2="1" y2="0"><stop offset="0" stop-color="#8a8a8a"/><stop offset="0.5" stop-color="#fdfdfd"/><stop offset="1" stop-color="#8a8a8a"/></linearGradient></defs><path d="M5.5,1.5 H10.5 V3.5 H11.5 V6.5 H12.5 V8.5 H15.5 V11.5 H12.5 V16.5 H3.5 V11.5 H0.5 V8.5 H3.5 V6.5 H4.5 V3.5 H5.5 Z" fill="url(#gt)" stroke="#000" stroke-width="1.2"/><path d="M0.5,8.5 H15.5 M0.5,11.5 H15.5" stroke="#000" stroke-width="1.2"/><rect x="1.5" y="9.4" width="13" height="1.3" fill="#f4f4f4"/></svg><div style="position:absolute;left:238px;top:206.29px;line-height:11px;font-size:11px;color:#1e1e1e;font-weight:400;letter-spacing:-0.180px;white-space:pre;">392.272HMD-40 12 052</div><div style="position:absolute;left:211px;top:232px;width:7px;height:1px;background:#8f96a3;"></div><svg style="position:absolute;left:218px;top:224px" width="16" height="17" viewBox="0 0 16 17"><defs><linearGradient id="gt" x1="0" y1="0" x2="1" y2="0"><stop offset="0" stop-color="#8a8a8a"/><stop offset="0.5" stop-color="#fdfdfd"/><stop offset="1" stop-color="#8a8a8a"/></linearGradient></defs><path d="M5.5,1.5 H10.5 V3.5 H11.5 V6.5 H12.5 V8.5 H15.5 V11.5 H12.5 V16.5 H3.5 V11.5 H0.5 V8.5 H3.5 V6.5 H4.5 V3.5 H5.5 Z" fill="url(#gt)" stroke="#000" stroke-width="1.2"/><path d="M0.5,8.5 H15.5 M0.5,11.5 H15.5" stroke="#000" stroke-width="1.2"/><rect x="1.5" y="9.4" width="13" height="1.3" fill="#f4f4f4"/></svg><div style="position:absolute;left:238px;top:228.29px;line-height:11px;font-size:11px;color:#1e1e1e;font-weight:400;letter-spacing:-0.174px;white-space:pre;">392.140HMS-40 16 027</div><div style="position:absolute;left:202px;top:254px;width:8px;height:1px;background:#8f96a3;"></div><svg style="position:absolute;left:212px;top:248px" width="12" height="14" viewBox="0 0 12 14"><rect x="0.6" y="0.6" width="10.8" height="12.3" rx="2" fill="#fff" stroke="#404040" stroke-width="1.2"/><path d="M0.6,4.6 H11.4 M0.6,8.6 H11.4" stroke="#404040" stroke-width="1.2"/></svg><div style="position:absolute;left:232px;top:249.34px;line-height:12px;font-size:12px;color:#0c0cf0;font-weight:700;letter-spacing:0.049px;white-space:pre;">sandvik</div><svg style="position:absolute;left:198px;top:272px" width="9" height="9" viewBox="0 0 9 9"><defs><linearGradient id="ge2" x1="0" y1="0" x2="0" y2="1"><stop offset="0" stop-color="#fff"/><stop offset="0.55" stop-color="#f4f4f4"/><stop offset="0.6" stop-color="#e2e2e2"/><stop offset="1" stop-color="#e8e8e8"/></linearGradient></defs><rect x="0.5" y="0.5" width="8" height="8" rx="1.3" fill="url(#ge2)" stroke="#8c8c8c"/><rect x="2" y="4" width="5" height="1.2" fill="#3f5fb0"/></svg><div style="position:absolute;left:207px;top:276px;width:2px;height:1px;background:#8f96a3;"></div><svg style="position:absolute;left:212px;top:270px" width="12" height="14" viewBox="0 0 12 14"><rect x="0.6" y="0.6" width="10.8" height="12.3" rx="2" fill="#fff" stroke="#404040" stroke-width="1.2"/><path d="M0.6,4.6 H11.4 M0.6,8.6 H11.4" stroke="#404040" stroke-width="1.2"/></svg><div style="position:absolute;left:232px;top:271.34px;line-height:12px;font-size:12px;color:#0c0cf0;font-weight:700;letter-spacing:-0.011px;white-space:pre;">InchToolKit</div><svg style="position:absolute;left:198px;top:294px" width="9" height="9" viewBox="0 0 9 9"><defs><linearGradient id="ge2" x1="0" y1="0" x2="0" y2="1"><stop offset="0" stop-color="#fff"/><stop offset="0.55" stop-color="#f4f4f4"/><stop offset="0.6" stop-color="#e2e2e2"/><stop offset="1" stop-color="#e8e8e8"/></linearGradient></defs><rect x="0.5" y="0.5" width="8" height="8" rx="1.3" fill="url(#ge2)" stroke="#8c8c8c"/><rect x="2" y="4" width="5" height="1.2" fill="#3f5fb0"/></svg><div style="position:absolute;left:207px;top:298px;width:2px;height:1px;background:#8f96a3;"></div><svg style="position:absolute;left:212px;top:292px" width="12" height="14" viewBox="0 0 12 14"><rect x="0.6" y="0.6" width="10.8" height="12.3" rx="2" fill="#fff" stroke="#404040" stroke-width="1.2"/><path d="M0.6,4.6 H11.4 M0.6,8.6 H11.4" stroke="#404040" stroke-width="1.2"/></svg><div style="position:absolute;left:232px;top:293.34px;line-height:12px;font-size:12px;color:#0c0cf0;font-weight:700;letter-spacing:-0.023px;white-space:pre;">Metric-Aluminium</div><div style="position:absolute;left:872px;top:90px;width:16px;height:220px;background:#f0f0f0;"></div><div style="position:absolute;left:872px;top:107px;width:15px;height:17px;background:#cdcdcd;"></div><svg style="position:absolute;left:872px;top:90px" width="16" height="17" viewBox="0 0 16 17"><path d="M4.5,11 L8,7 L11.5,11" fill="none" stroke="#4d4d4d" stroke-width="2"/></svg><svg style="position:absolute;left:872px;top:293px" width="16" height="17" viewBox="0 0 16 17"><path d="M4.5,6 L8,10 L11.5,6" fill="none" stroke="#4d4d4d" stroke-width="2"/></svg><div style="position:absolute;left:196px;top:310px;width:692px;height:1px;background:#a9a9a9;"></div><div style="position:absolute;right:576px;top:322.34px;line-height:12px;font-size:12px;color:#8e8e8e;font-weight:400;white-space:pre;">Имя:</div><div style="position:absolute;right:576px;top:345.34px;line-height:12px;font-size:12px;color:#8e8e8e;font-weight:400;white-space:pre;">Файл CAD-модели:</div><div style="position:absolute;right:576px;top:368.34px;line-height:12px;font-size:12px;color:#8e8e8e;font-weight:400;white-space:pre;">Точка стыковки:</div><div style="position:absolute;right:576px;top:391.34px;line-height:12px;font-size:12px;color:#8e8e8e;font-weight:400;white-space:pre;">Размеры:</div><div style="position:absolute;left:315px;top:318px;width:292px;height:18px;border:1px solid #a8a8a8;border-radius:0px;background:#fff;overflow:hidden"></div><div style="position:absolute;left:317px;top:322.54px;line-height:12px;font-size:12px;color:#6a6a6a;font-weight:400;letter-spacing:0.207px;white-space:pre;">392.140CG-40 20 060</div><div style="position:absolute;left:315px;top:341px;width:267px;height:18px;border:1px solid #a8a8a8;border-radius:0px;background:#fff;overflow:hidden"></div><div style="position:absolute;left:588px;top:341px;width:19px;height:18px;border:1px solid #b4b4b4;background:#f5f5f5"></div><div style="position:absolute;left:592px;top:346.69px;line-height:11px;font-size:11px;color:#8080a0;font-weight:400;letter-spacing:0.800px;white-space:pre;">...</div><div style="position:absolute;left:315px;top:364px;width:54px;height:19px;border:1px solid #a8a8a8;border-radius:4px;background:#fff;overflow:hidden"></div><div style="position:absolute;left:321px;top:369.54px;line-height:12px;font-size:12px;color:#000;font-weight:400;white-space:pre;">84</div><div style="position:absolute;left:315px;top:387px;width:292px;height:18px;border:1px solid #a8a8a8;border-radius:0px;background:#fff;overflow:hidden"></div><div style="position:absolute;left:316px;top:388px;width:291px;height:18px;overflow:hidden"><div style="position:absolute;left:1px;top:3.54px;line-height:12px;font-size:12px;color:#6a6a6a;font-weight:400;letter-spacing:0.500px;white-space:pre;">34;0;65;11;65;1;66;0;66;17;65;0;65;1;55;0;55;14;85</div></div><div style="position:absolute;left:614px;top:314px;width:1px;height:250px;background:#a3a3a3;"></div><div style="position:absolute;left:212px;top:417.44px;line-height:12px;font-size:12px;color:#2d2d4d;font-weight:400;white-space:pre;">Ступени оправки:</div><svg style="position:absolute;left:331px;top:417px" width="13" height="13" viewBox="0 0 13 13"><path d="M6.5,1 V12 M1,6.5 H12" stroke="#5a9a4a" stroke-width="3.6"/><path d="M6.5,1.8 V11.2 M1.8,6.5 H11.2" stroke="#a8dc8c" stroke-width="1.8"/></svg><svg style="position:absolute;left:360px;top:416px" width="14" height="14" viewBox="0 0 14 14"><path d="M2,2 L12,12 M12,2 L2,12" stroke="#c95a5a" stroke-width="3.8"/><path d="M2.5,2.5 L11.5,11.5 M11.5,2.5 L2.5,11.5" stroke="#ff9a9a" stroke-width="2"/></svg><div style="position:absolute;left:0;top:0;width:889px;height:564px;overflow:hidden"><div style="position:absolute;left:236px;top:433px;width:1px;height:131px;background:#e2e2e2;"></div><div style="position:absolute;left:318px;top:433px;width:1px;height:131px;background:#e2e2e2;"></div><div style="position:absolute;left:400px;top:433px;width:1px;height:131px;background:#e2e2e2;"></div><div style="position:absolute;left:196px;top:452px;width:205px;height:1px;background:#d6d6d6;"></div><div style="position:absolute;left:196px;top:472px;width:205px;height:1px;background:#e2e2e2;"></div><div style="position:absolute;left:196px;top:492px;width:205px;height:1px;background:#e2e2e2;"></div><div style="position:absolute;left:196px;top:512px;width:205px;height:1px;background:#e2e2e2;"></div><div style="position:absolute;left:196px;top:532px;width:205px;height:1px;background:#e2e2e2;"></div><div style="position:absolute;left:196px;top:552px;width:205px;height:1px;background:#e2e2e2;"></div><div style="position:absolute;left:202px;top:437.34px;line-height:12px;font-size:12px;color:#1e1e1e;font-weight:400;white-space:pre;">#</div><div style="position:absolute;left:243px;top:437.34px;line-height:12px;font-size:12px;color:#1e1e1e;font-weight:400;white-space:pre;">Диаметр</div><div style="position:absolute;left:325px;top:437.34px;line-height:12px;font-size:12px;color:#1e1e1e;font-weight:400;white-space:pre;">Длина</div><div style="position:absolute;left:202px;top:457.14px;line-height:12px;font-size:12px;color:#1e1e1e;font-weight:400;white-space:pre;">1</div><div style="position:absolute;left:239px;top:457.14px;line-height:12px;font-size:12px;color:#1e1e1e;font-weight:400;white-space:pre;">34</div><div style="position:absolute;left:325px;top:457.14px;line-height:12px;font-size:12px;color:#1e1e1e;font-weight:400;white-space:pre;">0</div><div style="position:absolute;left:202px;top:477.14px;line-height:12px;font-size:12px;color:#1e1e1e;font-weight:400;white-space:pre;">2</div><div style="position:absolute;left:243px;top:477.14px;line-height:12px;font-size:12px;color:#1e1e1e;font-weight:400;white-space:pre;">65</div><div style="position:absolute;left:325px;top:477.14px;line-height:12px;font-size:12px;color:#1e1e1e;font-weight:400;white-space:pre;">11</div><div style="position:absolute;left:202px;top:497.14px;line-height:12px;font-size:12px;color:#1e1e1e;font-weight:400;white-space:pre;">3</div><div style="position:absolute;left:243px;top:497.14px;line-height:12px;font-size:12px;color:#1e1e1e;font-weight:400;white-space:pre;">65</div><div style="position:absolute;left:325px;top:497.14px;line-height:12px;font-size:12px;color:#1e1e1e;font-weight:400;white-space:pre;">1</div><div style="position:absolute;left:202px;top:517.14px;line-height:12px;font-size:12px;color:#1e1e1e;font-weight:400;white-space:pre;">4</div><div style="position:absolute;left:243px;top:517.14px;line-height:12px;font-size:12px;color:#1e1e1e;font-weight:400;white-space:pre;">66</div><div style="position:absolute;left:325px;top:517.14px;line-height:12px;font-size:12px;color:#1e1e1e;font-weight:400;white-space:pre;">0</div><div style="position:absolute;left:202px;top:537.14px;line-height:12px;font-size:12px;color:#1e1e1e;font-weight:400;white-space:pre;">5</div><div style="position:absolute;left:243px;top:537.14px;line-height:12px;font-size:12px;color:#1e1e1e;font-weight:400;white-space:pre;">66</div><div style="position:absolute;left:325px;top:537.14px;line-height:12px;font-size:12px;color:#1e1e1e;font-weight:400;white-space:pre;">17</div><div style="position:absolute;left:202px;top:557.14px;line-height:12px;font-size:12px;color:#1e1e1e;font-weight:400;white-space:pre;">6</div><div style="position:absolute;left:243px;top:557.14px;line-height:12px;font-size:12px;color:#1e1e1e;font-weight:400;white-space:pre;">65</div><div style="position:absolute;left:325px;top:557.14px;line-height:12px;font-size:12px;color:#1e1e1e;font-weight:400;white-space:pre;">0</div></div><div style="position:absolute;left:598px;top:433px;width:16px;height:131px;background:#f0f0f0;"></div><div style="position:absolute;left:598px;top:450px;width:15px;height:17px;background:#cdcdcd;"></div><svg style="position:absolute;left:598px;top:433px" width="16" height="17" viewBox="0 0 16 17"><path d="M4.5,11 L8,7 L11.5,11" fill="none" stroke="#4d4d4d" stroke-width="2"/></svg><svg style="position:absolute;left:598px;top:547px" width="16" height="17" viewBox="0 0 16 17"><path d="M4.5,6.5 L8,10.5 L11.5,6.5" fill="none" stroke="#4d4d4d" stroke-width="2"/></svg><svg style="position:absolute;left:0;top:0" width="889" height="599" viewBox="0 0 889 599">
<defs>
<linearGradient id="gc" x1="0" y1="0" x2="1" y2="0"><stop offset="0" stop-color="#d2d2d2"/><stop offset="0.45" stop-color="#f2f2f2"/><stop offset="1" stop-color="#d6d6d6"/></linearGradient>
<linearGradient id="gf" x1="0" y1="0" x2="0" y2="1"><stop offset="0" stop-color="#555"/><stop offset="0.5" stop-color="#4a4a4a"/><stop offset="1" stop-color="#3a3a3a"/></linearGradient>
</defs>
<path d="M731,325.5 H750 L756.7,371.5 H724.2 Z" fill="url(#gc)"/>
<line x1="749.53" y1="325.5" x2="756.14" y2="371.5" stroke="#333" stroke-width="0.9"/><line x1="747.07" y1="325.5" x2="751.91" y2="371.5" stroke="#333" stroke-width="0.9"/><line x1="742.81" y1="325.5" x2="744.58" y2="371.5" stroke="#333" stroke-width="0.9"/><line x1="737.89" y1="325.5" x2="736.12" y2="371.5" stroke="#333" stroke-width="0.9"/><line x1="733.63" y1="325.5" x2="728.79" y2="371.5" stroke="#333" stroke-width="0.9"/><line x1="731.17" y1="325.5" x2="724.56" y2="371.5" stroke="#333" stroke-width="0.9"/>
<path d="M730.9,325.5 L724.2,371.5 M749.8,325.5 L756.6,371.5" stroke="#333" stroke-width="1.1"/>
<path d="M731,325.7 H750" stroke="#333" stroke-width="1.6"/>
<path d="M724.2,371.6 H756.7" stroke="#333" stroke-width="1"/>
<rect x="725" y="380" width="32" height="7.5" fill="url(#gc)"/>
<line x1="725.9" y1="380.5" x2="725.9" y2="387" stroke="#3a3a3a" stroke-width="0.9"/><line x1="731.9" y1="380.5" x2="731.9" y2="387" stroke="#3a3a3a" stroke-width="0.9"/><line x1="737.9" y1="380.5" x2="737.9" y2="387" stroke="#3a3a3a" stroke-width="0.9"/><line x1="743.9" y1="380.5" x2="743.9" y2="387" stroke="#3a3a3a" stroke-width="0.9"/><line x1="749.9" y1="380.5" x2="749.9" y2="387" stroke="#3a3a3a" stroke-width="0.9"/><line x1="755.2" y1="380.5" x2="755.2" y2="387" stroke="#3a3a3a" stroke-width="0.9"/>
<path d="M716.2,373 H765.5 L763.5,376.5 L765.7,380 H716.2 L718.2,376.5 Z" fill="url(#gf)" stroke="#2f2f2f" stroke-width="0.8"/>
<rect x="739" y="371.6" width="2.6" height="1.8" fill="#111"/>
<path d="M721,387.5 H760 V398.3 L750,405.5 H731.2 L721,398.3 Z" fill="url(#gc)"/>
<line x1="722.1" y1="388" x2="722.1" y2="398" stroke="#3a3a3a" stroke-width="0.9"/><line x1="729.7" y1="388" x2="729.7" y2="398" stroke="#3a3a3a" stroke-width="0.9"/><line x1="737.5" y1="388" x2="737.5" y2="398" stroke="#3a3a3a" stroke-width="0.9"/><line x1="743.2" y1="388" x2="743.2" y2="398" stroke="#3a3a3a" stroke-width="0.9"/><line x1="751.1" y1="388" x2="751.1" y2="398" stroke="#3a3a3a" stroke-width="0.9"/><line x1="757.8" y1="388" x2="757.8" y2="398" stroke="#3a3a3a" stroke-width="0.9"/>
<line x1="722.1" y1="398.5" x2="731.5" y2="405" stroke="#444" stroke-width="0.8"/><line x1="729.7" y1="398.5" x2="734.6" y2="405" stroke="#444" stroke-width="0.8"/><line x1="737.5" y1="398.5" x2="738.5" y2="405" stroke="#444" stroke-width="0.8"/><line x1="743.2" y1="398.5" x2="742.5" y2="405" stroke="#444" stroke-width="0.8"/><line x1="751.1" y1="398.5" x2="746.5" y2="405" stroke="#444" stroke-width="0.8"/><line x1="757.8" y1="398.5" x2="749.5" y2="405" stroke="#444" stroke-width="0.8"/>
<path d="M721,387.8 H760" stroke="#333" stroke-width="1.6"/>
<path d="M721,387.5 V398.3 L731.2,405.3 H750 L760,398.3 V387.5" fill="none" stroke="#333" stroke-width="1"/>
<path d="M721,398.3 H760" stroke="#333" stroke-width="1.1"/>
<path d="M734.33,405.50 L734.38,406.50 L734.43,407.50 L734.49,408.50 L734.56,409.50 L734.62,410.50 L734.69,411.50 L734.65,412.50 L734.58,413.50 L734.52,414.50 L734.46,415.50 L734.40,416.50 L734.35,417.50 L734.31,418.50 L734.27,419.50 L734.24,420.50 L734.22,421.50 L734.20,422.50 L734.20,423.50 L734.20,424.50 L734.22,425.50 L734.24,426.50 L734.27,427.50 L734.31,428.50 L734.35,429.50 L734.41,430.50 L734.46,431.50 L734.52,432.50 L734.59,433.50 L734.65,434.50 L734.68,435.50 L734.61,436.50 L734.55,437.50 L734.49,438.50 L734.43,439.50 L734.37,440.50 L734.33,441.50 L734.29,442.50 L734.25,443.50 L734.23,444.50 L734.21,445.50 L734.20,446.50 L734.20,447.50 L734.21,448.50 L734.23,449.50 L734.26,450.50 L734.29,451.50 L734.33,452.50 L734.38,453.50 L734.43,454.50 L734.49,455.50 L734.56,456.50 L734.62,457.50 L734.69,458.50 L734.65,459.50 L734.58,460.50 L734.52,461.50 L734.46,462.50 L734.40,463.50 L734.35,464.50 L734.31,465.50 L734.27,466.50 L734.24,467.50 L734.22,468.50 L734.20,469.50 L734.20,470.50 L734.20,471.50 L734.22,472.50 L734.24,473.50 L734.27,474.50 L734.31,475.50 L734.35,476.50 L734.41,477.50 L734.46,478.50 L734.52,479.50 L734.59,480.50 L734.65,481.50 L734.68,482.50 L734.61,483.50 L734.55,484.50 L734.49,485.50 L734.43,486.50 L734.37,487.50 L734.33,488.50 L734.29,489.50 L734.25,490.50 L734.23,491.50 L734.21,492.50 L734.20,493.50 L734.20,494.50 L734.21,495.50 L734.23,496.50 L734.26,497.50 L734.29,498.50 L734.33,499.50 L734.38,500.50 L734.43,501.50 L734.49,502.50 L734.56,503.50 L734.62,504.50 L734.69,505.50 L734.65,506.50 L734.58,507.50 L734.52,508.50 L734.46,509.50 L734.40,510.50 L734.35,511.50 L734.31,512.50 L734.27,513.50 L734.24,514.50 L734.22,515.50 L734.20,516.50 L734.20,517.50 L734.20,518.50 L734.22,519.50 L734.24,520.50 L734.27,521.50 L734.31,522.50 L734.35,523.50 L734.41,524.50 L734.46,525.50 L734.52,526.50 L734.59,527.50 L734.65,528.50 L734.68,529.50 L734.61,530.50 L734.55,531.50 L734.49,532.50 L734.43,533.50 L734.37,534.50 L734.33,535.50 L734.29,536.50 L734.25,537.50 L734.23,538.50 L734.21,539.50 L734.20,540.50 L734.20,541.50 L734.21,542.50 L734.23,543.50 L734.26,544.50 L734.29,545.50 L734.33,546.50 L734.38,547.50 L734.43,548.50 L734.49,549.50 L746.91,549.50 L746.97,548.50 L747.02,547.50 L747.07,546.50 L747.11,545.50 L747.14,544.50 L747.17,543.50 L747.19,542.50 L747.20,541.50 L747.20,540.50 L747.19,539.50 L747.17,538.50 L747.15,537.50 L747.11,536.50 L747.07,535.50 L747.03,534.50 L746.97,533.50 L746.91,532.50 L746.85,531.50 L746.79,530.50 L746.72,529.50 L746.75,528.50 L746.81,527.50 L746.88,526.50 L746.94,525.50 L746.99,524.50 L747.05,523.50 L747.09,522.50 L747.13,521.50 L747.16,520.50 L747.18,519.50 L747.20,518.50 L747.20,517.50 L747.20,516.50 L747.18,515.50 L747.16,514.50 L747.13,513.50 L747.09,512.50 L747.05,511.50 L747.00,510.50 L746.94,509.50 L746.88,508.50 L746.82,507.50 L746.75,506.50 L746.71,505.50 L746.78,504.50 L746.84,503.50 L746.91,502.50 L746.97,501.50 L747.02,500.50 L747.07,499.50 L747.11,498.50 L747.14,497.50 L747.17,496.50 L747.19,495.50 L747.20,494.50 L747.20,493.50 L747.19,492.50 L747.17,491.50 L747.15,490.50 L747.11,489.50 L747.07,488.50 L747.03,487.50 L746.97,486.50 L746.91,485.50 L746.85,484.50 L746.79,483.50 L746.72,482.50 L746.75,481.50 L746.81,480.50 L746.88,479.50 L746.94,478.50 L746.99,477.50 L747.05,476.50 L747.09,475.50 L747.13,474.50 L747.16,473.50 L747.18,472.50 L747.20,471.50 L747.20,470.50 L747.20,469.50 L747.18,468.50 L747.16,467.50 L747.13,466.50 L747.09,465.50 L747.05,464.50 L747.00,463.50 L746.94,462.50 L746.88,461.50 L746.82,460.50 L746.75,459.50 L746.71,458.50 L746.78,457.50 L746.84,456.50 L746.91,455.50 L746.97,454.50 L747.02,453.50 L747.07,452.50 L747.11,451.50 L747.14,450.50 L747.17,449.50 L747.19,448.50 L747.20,447.50 L747.20,446.50 L747.19,445.50 L747.17,444.50 L747.15,443.50 L747.11,442.50 L747.07,441.50 L747.03,440.50 L746.97,439.50 L746.91,438.50 L746.85,437.50 L746.79,436.50 L746.72,435.50 L746.75,434.50 L746.81,433.50 L746.88,432.50 L746.94,431.50 L746.99,430.50 L747.05,429.50 L747.09,428.50 L747.13,427.50 L747.16,426.50 L747.18,425.50 L747.20,424.50 L747.20,423.50 L747.20,422.50 L747.18,421.50 L747.16,420.50 L747.13,419.50 L747.09,418.50 L747.05,417.50 L747.00,416.50 L746.94,415.50 L746.88,414.50 L746.82,413.50 L746.75,412.50 L746.71,411.50 L746.78,410.50 L746.84,409.50 L746.91,408.50 L746.97,407.50 L747.02,406.50 L747.07,405.50 Z" fill="#eddcb5" stroke="#e6c27a" stroke-width="0.7"/>
<path d="M737.64,405.50 L737.89,406.00 L738.13,406.50 L738.38,407.00 L738.63,407.50 L738.87,408.00 L739.12,408.50 L739.37,409.00 L739.61,409.50 L739.86,410.00 L740.11,410.50 L740.35,411.00 L740.60,411.50 L740.85,412.00 L741.09,412.50 L741.34,413.00 L741.59,413.50 L741.84,414.00 L742.08,414.50 L742.33,415.00 L742.58,415.50 L742.82,416.00 L743.07,416.50 L743.32,417.00 L743.56,417.50 L743.81,418.00 L744.06,418.50 L744.30,419.00 L744.55,419.50 L744.80,420.00 L745.04,420.50 L745.29,421.00 L745.54,421.50 L745.78,422.00 L746.03,422.50 L746.28,423.00 L746.48,423.50 L746.23,424.00 L745.98,424.50 L745.73,425.00 L745.49,425.50 L745.24,426.00 L744.99,426.50 L744.75,427.00 L744.50,427.50 L744.25,428.00 L744.01,428.50 L743.76,429.00 L743.51,429.50 L743.27,430.00 L743.02,430.50 L742.77,431.00 L742.53,431.50 L742.28,432.00 L742.03,432.50 L741.79,433.00 L741.54,433.50 L741.29,434.00 L741.05,434.50 L740.80,435.00 L740.55,435.50 L740.31,436.00 L740.06,436.50 L739.81,437.00 L739.56,437.50 L739.32,438.00 L739.07,438.50 L738.82,439.00 L738.58,439.50 L738.33,440.00 L738.08,440.50 L737.84,441.00 L737.59,441.50 L737.34,442.00 L737.10,442.50 L736.85,443.00 L736.60,443.50 L736.36,444.00 L736.11,444.50 L735.86,445.00 L735.62,445.50 L735.37,446.00 L735.12,446.50 L734.92,447.00 L735.17,447.50 L735.42,448.00 L735.67,448.50 L735.91,449.00 L736.16,449.50 L736.41,450.00 L736.65,450.50 L736.90,451.00 L737.15,451.50 L737.39,452.00 L737.64,452.50 L737.89,453.00 L738.13,453.50 L738.38,454.00 L738.63,454.50 L738.87,455.00 L739.12,455.50 L739.37,456.00 L739.61,456.50 L739.86,457.00 L740.11,457.50 L740.35,458.00 L740.60,458.50 L740.85,459.00 L741.09,459.50 L741.34,460.00 L741.59,460.50 L741.84,461.00 L742.08,461.50 L742.33,462.00 L742.58,462.50 L742.82,463.00 L743.07,463.50 L743.32,464.00 L743.56,464.50 L743.81,465.00 L744.06,465.50 L744.30,466.00 L744.55,466.50 L744.80,467.00 L745.04,467.50 L745.29,468.00 L745.54,468.50 L745.78,469.00 L746.03,469.50 L746.28,470.00 L746.48,470.50 L746.23,471.00 L745.98,471.50 L745.73,472.00 L745.49,472.50 L745.24,473.00 L744.99,473.50 L744.75,474.00 L744.50,474.50 L744.25,475.00 L744.01,475.50 L743.76,476.00 L743.51,476.50 L743.27,477.00 L743.02,477.50 L742.77,478.00 L742.53,478.50 L742.28,479.00 L742.03,479.50 L741.79,480.00 L741.54,480.50 L741.29,481.00 L741.05,481.50 L740.80,482.00 L740.55,482.50 L740.31,483.00 L740.06,483.50 L739.81,484.00 L739.56,484.50 L739.32,485.00 L739.07,485.50 L738.82,486.00 L738.58,486.50 L738.33,487.00 L738.08,487.50 L737.84,488.00 L737.59,488.50 L737.34,489.00 L737.10,489.50 L736.85,490.00 L736.60,490.50 L736.36,491.00 L736.11,491.50 L735.86,492.00 L735.62,492.50 L735.37,493.00 L735.12,493.50 L734.92,494.00 L735.17,494.50 L735.42,495.00 L735.67,495.50 L735.91,496.00 L736.16,496.50 L736.41,497.00 L736.65,497.50 L736.90,498.00 L737.15,498.50 L737.39,499.00 L737.64,499.50 L737.89,500.00 L738.13,500.50 L738.38,501.00 L738.63,501.50 L738.87,502.00 L739.12,502.50 L739.37,503.00 L739.61,503.50 L739.86,504.00 L740.11,504.50 L740.35,505.00 L740.60,505.50 L740.85,506.00 L741.09,506.50 L741.34,507.00 L741.59,507.50 L741.84,508.00 L742.08,508.50 L742.33,509.00 L742.58,509.50 L742.82,510.00 L743.07,510.50 L743.32,511.00 L743.56,511.50 L743.81,512.00 L744.06,512.50 L744.30,513.00 L744.55,513.50 L744.80,514.00 L745.04,514.50 L745.29,515.00 L745.54,515.50 L745.78,516.00 L746.03,516.50 L746.28,517.00 L746.48,517.50 L746.23,518.00 L745.98,518.50 L745.73,519.00 L745.49,519.50 L745.24,520.00 L744.99,520.50 L744.75,521.00 L744.50,521.50 L744.25,522.00 L744.01,522.50 L743.76,523.00 L743.51,523.50 L743.27,524.00 L743.02,524.50 L742.77,525.00 L742.53,525.50 L742.28,526.00 L742.03,526.50 L741.79,527.00 L741.54,527.50 L741.29,528.00 L741.05,528.50 L740.80,529.00 L740.55,529.50 L740.31,530.00 L740.06,530.50 L739.81,531.00 L739.56,531.50 L739.32,532.00 L739.07,532.50 L738.82,533.00 L738.58,533.50 L738.33,534.00 L738.08,534.50 L737.84,535.00 L737.59,535.50 L737.34,536.00 L737.10,536.50 L736.85,537.00 L736.60,537.50 L736.36,538.00 L736.11,538.50 L735.86,539.00 L735.62,539.50 L735.37,540.00 L735.12,540.50 L734.92,541.00 L735.17,541.50 L735.42,542.00 L735.67,542.50 L735.91,543.00 L736.16,543.50 L736.41,544.00 L736.65,544.50 L736.90,545.00 L737.15,545.50 L737.39,546.00 L737.64,546.50 L737.89,547.00 L738.13,547.50 L738.38,548.00 L738.63,548.50 L738.87,549.00 L739.12,549.50" fill="none" stroke="#dba53e" stroke-width="0.9"/>
<path d="M743.76,405.50 L743.51,406.00 L743.27,406.50 L743.02,407.00 L742.77,407.50 L742.53,408.00 L742.28,408.50 L742.03,409.00 L741.79,409.50 L741.54,410.00 L741.29,410.50 L741.05,411.00 L740.80,411.50 L740.55,412.00 L740.31,412.50 L740.06,413.00 L739.81,413.50 L739.56,414.00 L739.32,414.50 L739.07,415.00 L738.82,415.50 L738.58,416.00 L738.33,416.50 L738.08,417.00 L737.84,417.50 L737.59,418.00 L737.34,418.50 L737.10,419.00 L736.85,419.50 L736.60,420.00 L736.36,420.50 L736.11,421.00 L735.86,421.50 L735.62,422.00 L735.37,422.50 L735.12,423.00 L734.92,423.50 L735.17,424.00 L735.42,424.50 L735.67,425.00 L735.91,425.50 L736.16,426.00 L736.41,426.50 L736.65,427.00 L736.90,427.50 L737.15,428.00 L737.39,428.50 L737.64,429.00 L737.89,429.50 L738.13,430.00 L738.38,430.50 L738.63,431.00 L738.87,431.50 L739.12,432.00 L739.37,432.50 L739.61,433.00 L739.86,433.50 L740.11,434.00 L740.35,434.50 L740.60,435.00 L740.85,435.50 L741.09,436.00 L741.34,436.50 L741.59,437.00 L741.84,437.50 L742.08,438.00 L742.33,438.50 L742.58,439.00 L742.82,439.50 L743.07,440.00 L743.32,440.50 L743.56,441.00 L743.81,441.50 L744.06,442.00 L744.30,442.50 L744.55,443.00 L744.80,443.50 L745.04,444.00 L745.29,444.50 L745.54,445.00 L745.78,445.50 L746.03,446.00 L746.28,446.50 L746.48,447.00 L746.23,447.50 L745.98,448.00 L745.73,448.50 L745.49,449.00 L745.24,449.50 L744.99,450.00 L744.75,450.50 L744.50,451.00 L744.25,451.50 L744.01,452.00 L743.76,452.50 L743.51,453.00 L743.27,453.50 L743.02,454.00 L742.77,454.50 L742.53,455.00 L742.28,455.50 L742.03,456.00 L741.79,456.50 L741.54,457.00 L741.29,457.50 L741.05,458.00 L740.80,458.50 L740.55,459.00 L740.31,459.50 L740.06,460.00 L739.81,460.50 L739.56,461.00 L739.32,461.50 L739.07,462.00 L738.82,462.50 L738.58,463.00 L738.33,463.50 L738.08,464.00 L737.84,464.50 L737.59,465.00 L737.34,465.50 L737.10,466.00 L736.85,466.50 L736.60,467.00 L736.36,467.50 L736.11,468.00 L735.86,468.50 L735.62,469.00 L735.37,469.50 L735.12,470.00 L734.92,470.50 L735.17,471.00 L735.42,471.50 L735.67,472.00 L735.91,472.50 L736.16,473.00 L736.41,473.50 L736.65,474.00 L736.90,474.50 L737.15,475.00 L737.39,475.50 L737.64,476.00 L737.89,476.50 L738.13,477.00 L738.38,477.50 L738.63,478.00 L738.87,478.50 L739.12,479.00 L739.37,479.50 L739.61,480.00 L739.86,480.50 L740.11,481.00 L740.35,481.50 L740.60,482.00 L740.85,482.50 L741.09,483.00 L741.34,483.50 L741.59,484.00 L741.84,484.50 L742.08,485.00 L742.33,485.50 L742.58,486.00 L742.82,486.50 L743.07,487.00 L743.32,487.50 L743.56,488.00 L743.81,488.50 L744.06,489.00 L744.30,489.50 L744.55,490.00 L744.80,490.50 L745.04,491.00 L745.29,491.50 L745.54,492.00 L745.78,492.50 L746.03,493.00 L746.28,493.50 L746.48,494.00 L746.23,494.50 L745.98,495.00 L745.73,495.50 L745.49,496.00 L745.24,496.50 L744.99,497.00 L744.75,497.50 L744.50,498.00 L744.25,498.50 L744.01,499.00 L743.76,499.50 L743.51,500.00 L743.27,500.50 L743.02,501.00 L742.77,501.50 L742.53,502.00 L742.28,502.50 L742.03,503.00 L741.79,503.50 L741.54,504.00 L741.29,504.50 L741.05,505.00 L740.80,505.50 L740.55,506.00 L740.31,506.50 L740.06,507.00 L739.81,507.50 L739.56,508.00 L739.32,508.50 L739.07,509.00 L738.82,509.50 L738.58,510.00 L738.33,510.50 L738.08,511.00 L737.84,511.50 L737.59,512.00 L737.34,512.50 L737.10,513.00 L736.85,513.50 L736.60,514.00 L736.36,514.50 L736.11,515.00 L735.86,515.50 L735.62,516.00 L735.37,516.50 L735.12,517.00 L734.92,517.50 L735.17,518.00 L735.42,518.50 L735.67,519.00 L735.91,519.50 L736.16,520.00 L736.41,520.50 L736.65,521.00 L736.90,521.50 L737.15,522.00 L737.39,522.50 L737.64,523.00 L737.89,523.50 L738.13,524.00 L738.38,524.50 L738.63,525.00 L738.87,525.50 L739.12,526.00 L739.37,526.50 L739.61,527.00 L739.86,527.50 L740.11,528.00 L740.35,528.50 L740.60,529.00 L740.85,529.50 L741.09,530.00 L741.34,530.50 L741.59,531.00 L741.84,531.50 L742.08,532.00 L742.33,532.50 L742.58,533.00 L742.82,533.50 L743.07,534.00 L743.32,534.50 L743.56,535.00 L743.81,535.50 L744.06,536.00 L744.30,536.50 L744.55,537.00 L744.80,537.50 L745.04,538.00 L745.29,538.50 L745.54,539.00 L745.78,539.50 L746.03,540.00 L746.28,540.50 L746.48,541.00 L746.23,541.50 L745.98,542.00 L745.73,542.50 L745.49,543.00 L745.24,543.50 L744.99,544.00 L744.75,544.50 L744.50,545.00 L744.25,545.50 L744.01,546.00 L743.76,546.50 L743.51,547.00 L743.27,547.50 L743.02,548.00 L742.77,548.50 L742.53,549.00 L742.28,549.50" fill="none" stroke="#dba53e" stroke-width="0.9"/>
<path d="M734,549.5 H747.5" stroke="#d9a440" stroke-width="1.4"/>
<circle cx="741" cy="553" r="3" fill="#fff" stroke="#808080" stroke-width="1"/>
<line x1="653.5" y1="508" x2="653.5" y2="528" stroke="#6d6dff" stroke-width="1.6"/>
<line x1="653" y1="528" x2="673" y2="528" stroke="#ff6d6d" stroke-width="1.6"/>
</svg><svg style="position:absolute;left:656px;top:511px" width="7" height="9" viewBox="0 0 7 9"><path d="M1,1.5 H6 L1,7.5 H6.5" fill="none" stroke="#0000ff" stroke-width="1.4"/></svg><svg style="position:absolute;left:656px;top:531px" width="7" height="9" viewBox="0 0 7 9"><path d="M1,1 L3.5,4.5 L6,1 M3.5,4.5 V8" fill="none" stroke="#0a8a0a" stroke-width="1.4"/></svg><svg style="position:absolute;left:676px;top:531px" width="7" height="9" viewBox="0 0 7 9"><path d="M1,1 L6,8 M6,1 L1,8" fill="none" stroke="#ff0000" stroke-width="1.4"/></svg><svg style="position:absolute;left:866px;top:317px" width="18" height="18" viewBox="0 0 18 18"><g transform="rotate(12 8.7 9.2)"><ellipse cx="8.7" cy="9.2" rx="3.4" ry="6.8" fill="#f2f2f2" stroke="#444" stroke-width="1.2"/><ellipse cx="8.7" cy="9.2" rx="6.8" ry="3.4" fill="none" stroke="#444" stroke-width="1.2"/></g><circle cx="8.7" cy="9.2" r="1.7" fill="#fff"/></svg><svg style="position:absolute;left:866px;top:342px" width="18" height="16" viewBox="0 0 18 16"><defs><linearGradient id="ghd" x1="0" y1="0" x2="1" y2="1"><stop offset="0" stop-color="#f4f4f4"/><stop offset="0.6" stop-color="#e6e6e6"/><stop offset="1" stop-color="#9a9a9a"/></linearGradient></defs><path d="M3,5 Q4,2 7,2 H12 Q14,3 15.5,6 L17,10 Q17,12 15,12.5 L13.5,13.8 H7 Q4,13 3,11 L1.5,8.5 Z" fill="url(#ghd)" stroke="#666" stroke-width="0.9"/><path d="M5,3 Q6.5,4.5 8,3 Q9.5,4.5 11,3 Q12.5,4.5 13.5,4" fill="none" stroke="#777" stroke-width="0.9"/><path d="M2,7.8 Q5,6.5 8,10" fill="none" stroke="#222" stroke-width="1.8"/><path d="M4.5,12 Q9,14.5 14,13" fill="none" stroke="#333" stroke-width="1.3"/></svg><svg style="position:absolute;left:866px;top:366px" width="17" height="16" viewBox="0 0 17 16"><circle cx="10.5" cy="6.5" r="4.6" fill="#e4e4e4" stroke="#6a6a6a" stroke-width="1.4"/><path d="M7.3,9.7 L2,15" stroke="#555" stroke-width="2.4"/></svg><svg style="position:absolute;left:866px;top:389px" width="18" height="18" viewBox="0 0 18 18"><rect x="2.5" y="2.5" width="10" height="10" fill="#e2e2e2" stroke="#555" stroke-width="0.9" stroke-dasharray="1.5,1.2"/><path d="M12,12 L17,17" stroke="#000" stroke-width="1.7"/><path d="M11.5,11.5 H16 L11.5,16 Z" fill="#000"/></svg><svg style="position:absolute;left:866px;top:413px" width="18" height="17" viewBox="0 0 18 17"><rect x="5.5" y="4.5" width="8" height="8" fill="#e2e2e2" stroke="#777" stroke-width="0.9" stroke-dasharray="1.5,1"/><path d="M1,0.5 L5,4.5 M17,0.5 L13.5,4.5 M1,16.5 L5.5,12.5 M17,16.5 L13.5,12.5" stroke="#444" stroke-width="1" stroke-dasharray="1.5,0.8"/></svg><svg style="position:absolute;left:864px;top:439px" width="24" height="15" viewBox="0 0 24 15"><defs><linearGradient id="gcb" x1="0" y1="0" x2="1" y2="1"><stop offset="0" stop-color="#fff"/><stop offset="1" stop-color="#999"/></linearGradient></defs><path d="M1.5,5.5 L5.5,1.5 H13.5 V9.5 L10.5,13.5 H1.5 Z" fill="url(#gcb)"/><path d="M1.5,5.5 L5.5,1.5 H13.5 L10.5,5.5 Z" fill="#6e6e6e"/><path d="M1.5,5.5 L5.5,1.5 H13.5 V9.5 L10.5,13.5 H1.5 Z M1.5,5.5 H10.5 V13.5 M10.5,5.5 L13.5,1.5 M5.5,6 V9.5 L1.5,13.5" fill="none" stroke="#333" stroke-width="1.1"/><path d="M15,3.5 H22 L18.5,7.5 Z" fill="#000"/></svg><div style="position:absolute;left:714px;top:570px;width:168px;height:20px;border:1px solid #adadad;background:#f9f9f9"></div><div style="position:absolute;left:751px;top:576.44px;line-height:12px;font-size:12px;color:#23233f;font-weight:400;letter-spacing:0.075px;white-space:pre;">Выбрать оправку</div>
</body></html>
